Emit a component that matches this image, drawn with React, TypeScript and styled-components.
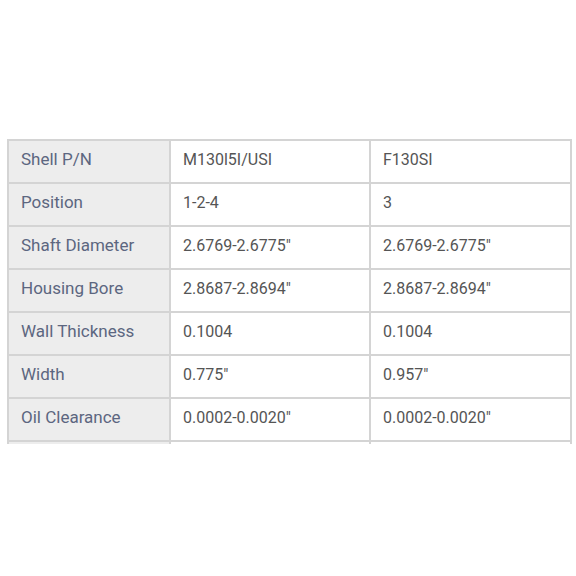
import styled, { createGlobalStyle } from "styled-components";

const GlobalStyle = createGlobalStyle`
  html, body {
    margin: 0;
    background: #ffffff;
  }
`;

const Page = styled.div`
  width: 576px;
  height: 576px;
  padding: 138px 4px 0 6px;
  box-sizing: border-box;
`;

// the table is cut off just under the last full row
const Clip = styled.div`
  height: 306px;
  padding: 1px;
  box-sizing: border-box;
  overflow: hidden;
`;

const Table = styled.table`
  width: 563px;
  border-collapse: collapse;
  table-layout: fixed;
  font-family: Roboto, "Liberation Sans", sans-serif;
`;

const Row = styled.tr`
  height: 43px;
`;

const Cell = styled.td<{ $label?: boolean }>`
  border: 2px solid #d4d4d4;
  padding: 0 12px 5px;
  vertical-align: middle;
  white-space: nowrap;
  background: ${(p) => (p.$label ? "#ededed" : "#ffffff")};
  color: ${(p) => (p.$label ? "#5c6680" : "#555555")};
  font-size: ${(p) => (p.$label ? "17px" : "16px")};
`;

const rows: [string, string, string][] = [
  ["Shell P/N", "M130l5I/USI", "F130SI"],
  ["Position", "1-2-4", "3"],
  ["Shaft Diameter", "2.6769-2.6775\"", "2.6769-2.6775\""],
  ["Housing Bore", "2.8687-2.8694\"", "2.8687-2.8694\""],
  ["Wall Thickness", "0.1004", "0.1004"],
  ["Width", "0.775\"", "0.957\""],
  ["Oil Clearance", "0.0002-0.0020\"", "0.0002-0.0020\""],
  ["", "", ""],
];

export default function App() {
  return (
    <>
      <GlobalStyle />
      <Page>
        <Clip>
          <Table>
            <colgroup>
              <col style={{ width: 162 }} />
              <col style={{ width: 200 }} />
              <col style={{ width: 201 }} />
            </colgroup>
            <tbody>
              {rows.map(([label, a, b], i) => (
                <Row key={i}>
                  <Cell $label>{label}</Cell>
                  <Cell>{a}</Cell>
                  <Cell>{b}</Cell>
                </Row>
              ))}
            </tbody>
          </Table>
        </Clip>
      </Page>
    </>
  );
}
